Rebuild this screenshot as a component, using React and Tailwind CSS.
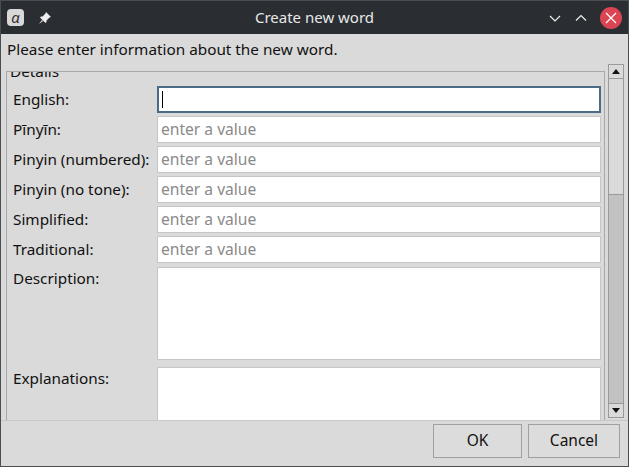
const font = { fontFamily: '"Noto Sans", "Open Sans", sans-serif' };

const rows = [
  ["English:", true],
  ["Pīnyīn:"],
  ["Pinyin (numbered):"],
  ["Pinyin (no tone):"],
  ["Simplified:"],
  ["Traditional:"],
];

export default function App() {
  return (
    <div style={font} className="w-[629px] h-[467px] bg-[#dadada] border border-[#4a4e52] flex flex-col overflow-hidden text-[15.3px] text-[#111]">
      <div className="h-[33px] shrink-0 bg-[#2a2e32] flex items-center px-[6px] relative text-[#e8e8e8]">
        <div className="w-[17px] h-[17px] bg-[#d8d8d8] rounded-sm flex items-center justify-center text-[#333] text-[15px] leading-none">
          <span className="italic">α</span>
        </div>
        <svg className="ml-[15px]" width="12" height="12" viewBox="0 0 12 12" fill="#eee">
          <path d="M7 0 L12 5 L10.5 5.5 L7.5 8.5 L7.5 10 L6.5 11 L1 5.5 L2 4.5 L3.5 4.5 L6.5 1.5 Z M3 8 L0 12 L4 9 Z" />
        </svg>
        <div className="absolute left-0 right-0 text-center text-[15px] pointer-events-none">Create new word</div>
        <div className="ml-auto flex items-center gap-[12px]">
          <svg width="14" height="14" viewBox="0 0 14 14" fill="none" stroke="#eee" strokeWidth="1.2"><path d="M2 5 L7 10 L12 5" /></svg>
          <svg width="14" height="14" viewBox="0 0 14 14" fill="none" stroke="#eee" strokeWidth="1.2"><path d="M2 9.5 L7 4.5 L12 9.5" /></svg>
          <div className="w-[22px] h-[22px] rounded-full bg-[#da4453] flex items-center justify-center">
            <svg width="12" height="12" viewBox="0 0 12 12" stroke="#fff" strokeWidth="1.3"><path d="M1 1 L11 11 M11 1 L1 11" /></svg>
          </div>
        </div>
      </div>
      <div className="px-[6px] pt-[4px] h-[25px]">Please enter information about the new word.</div>
      <div className="flex-1 flex min-h-0 gap-[3px] pr-[4px]">
        <div className="flex-1 relative ml-[5px] mt-[12px] border border-[#a8a8a8] border-b-0 pl-[6px] pr-[3px] overflow-hidden">
          <div className="absolute -top-px left-[2px] bg-[#dadada] px-[1px] leading-[18px] -translate-y-1/2 z-10">Details</div>
          <div className="flex flex-col gap-[3px] pt-[14px]">
            {rows.map(([l, f]) => (
              <div key={l} className="flex items-center h-[27px]">
                <span className="w-[144px] shrink-0">{l}</span>
                <div className={`flex-1 h-full bg-white flex items-center px-[3px] ${f ? "border-2 border-[#4b6a85]" : "border border-[#c6c6c6]"}`}>
                  {f ? <span className="w-px h-[17px] bg-black" /> : <span className="text-[#8a8a8a] text-[15.6px]">enter a value</span>}
                </div>
              </div>
            ))}
            <div className="flex h-[93px] mt-[1px]">
              <span className="w-[144px] shrink-0">Description:</span>
              <div className="flex-1 bg-white border border-[#c6c6c6]" />
            </div>
            <div className="flex h-[60px] mt-[4px]">
              <span className="w-[144px] shrink-0">Explanations:</span>
              <div className="flex-1 bg-white border border-[#c6c6c6]" />
            </div>
          </div>
        </div>
        <div className="w-[16px] mt-[5px] mb-[2px] border border-[#9a9a9a] bg-[#c2c2c2] flex flex-col">
          <div className="h-[14px] bg-[#dadada] border-b border-[#9a9a9a] flex items-center justify-center">
            <svg width="8" height="5" viewBox="0 0 8 5"><path d="M0 5 L4 0 L8 5 Z" fill="#111" /></svg>
          </div>
          <div className="h-[116px] bg-[#dadada] border-b border-[#9a9a9a]" />
          <div className="flex-1" />
          <div className="h-[14px] bg-[#dadada] border-t border-[#9a9a9a] flex items-center justify-center">
            <svg width="8" height="5" viewBox="0 0 8 5"><path d="M0 0 L4 5 L8 0 Z" fill="#111" /></svg>
          </div>
        </div>
      </div>
      <div className="h-[46px] shrink-0 flex justify-end items-start gap-[6px] pt-[3px] pr-[8px] border-t border-[#c8c8c8]">
        <button className="w-[89px] h-[34px] border border-[#a0a0a0] bg-[#dcdcdc] text-[15.5px]">OK</button>
        <button className="w-[92px] h-[34px] border border-[#a0a0a0] bg-[#dcdcdc] text-[15.5px]">Cancel</button>
      </div>
    </div>
  );
}
